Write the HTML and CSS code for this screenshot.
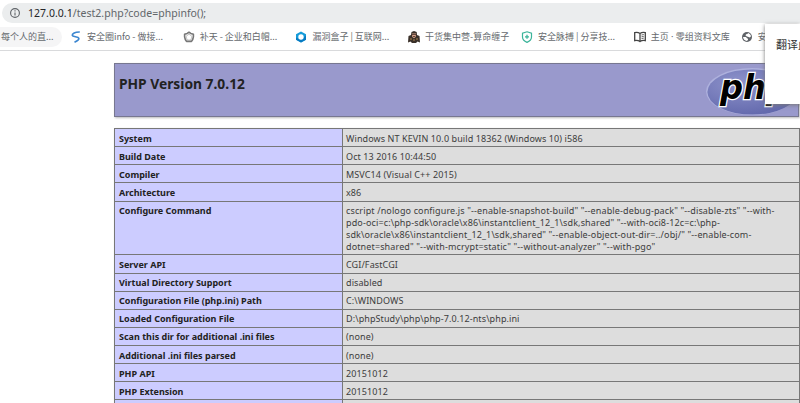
FILE: index.html
```html
<!DOCTYPE html>
<html lang="zh-CN">
<head>
<meta charset="utf-8">
<title>phpinfo()</title>
<link rel="stylesheet" href="styles.css">
</head>
<body>
<header class="toolbar">
  <div class="address">
    <svg class="info" viewBox="0 0 12 12"><circle cx="6" cy="6" r="4.4" fill="none" stroke="#5f6368" stroke-width="1.1"/><path d="M6 5.4v3M6 3.3v1.1" stroke="#5f6368" stroke-width="1.1"/></svg>
    <span class="url"><b>127.0.0.1</b>/test2.php?code=phpinfo();</span>
  </div>
</header>
<nav class="bookmarks">
  <a class="mark first"><span>每个人的直...</span></a>
  <a class="mark"><svg viewBox="0 0 12 12"><path d="M9.8 1C5 .9 2 2.4 2.3 4.3 2.6 6 8.2 5.5 8.8 7.2 9.3 8.7 7 10 4.5 11.2" fill="none" stroke="#3b86d0" stroke-width="1.7"/></svg><span>安全圈info - 做接...</span></a>
  <a class="mark"><svg viewBox="0 0 12 12"><path d="M6 1.2 7.8 2.4 10.4 3.3 10.4 5.9 9.7 8.5 8.5 10.4 6 10.2 3.5 10.4 2.3 8.5 1.6 5.9 1.6 3.3 4.2 2.4Z" fill="none" stroke="#777" stroke-width="1.6" stroke-linejoin="round"/><path d="M6 3.2 9 5.4 7.8 9H4.2L3 5.4Z" fill="none" stroke="#888" stroke-width=".5"/></svg><span>补天 - 企业和白帽...</span></a>
  <a class="mark"><svg viewBox="0 0 12 12"><path d="M6 .4 11 3.2V8.8L6 11.6 1 8.8V3.2Z" fill="#159bd9"/><path d="M1 6.5 6 8.8 11 4.5V8.8L6 11.6 1 8.8Z" fill="#087bc2"/><circle cx="6" cy="6" r="2.7" fill="#fff"/></svg><span>漏洞盒子 | 互联网...</span></a>
  <a class="mark wide"><svg viewBox="0 0 12 12"><path d="M3 4 3.5 1 6 0 8.7 1 9 4 11.5 5 12 11.5 9.5 10.5 8 12H4L2.5 10.5 0 11.5.5 5Z" fill="#3a3029"/><path d="M4 2.5h4l-.3 3.5L6 7.3 4.3 6Z" fill="#d9a48b"/><path d="M4 3.5h4M5 5.5h2" stroke="#493028" stroke-width=".8"/><path d="M2 8h2M8 8h2M5 9h2" stroke="#a98351"/></svg><span>干货集中营-算命缠子</span></a>
  <a class="mark"><svg viewBox="0 0 12 12"><path d="M6 .8 10.5 2.3V6C10.5 8.8 8.5 10.3 6 11.4 3.5 10.3 1.5 8.8 1.5 6V2.3Z" fill="none" stroke="#3bb49a" stroke-width="1.2"/><path d="M6 3.8v4M4 5.8h4" stroke="#3bb49a" stroke-width="1.3"/></svg><span>安全脉搏 | 分享技...</span></a>
  <a class="mark short"><svg viewBox="0 0 12 12"><path d="M6 2.5C4.5 1.4 2.5 1.2.7 1.6v8C2.5 9.2 4.5 9.5 6 10.6 7.5 9.5 9.5 9.2 11.3 9.6v-8C9.5 1.2 7.5 1.4 6 2.5ZM6 2.5v8" fill="none" stroke="#444" stroke-width="1.3"/><path d="M7.5 4 9.8 3.5M7.5 5.8 9.8 5.3M7.5 7.6 9.8 7.1" stroke="#444" stroke-width=".8"/></svg><span>主页<i class="dot"> · </i>零组资料文库</span></a>
  <a class="mark last"><svg viewBox="0 0 12 12"><circle cx="6" cy="6" r="5" fill="#5f6368"/><path d="M2 6h3l1 1.2 1 .5v1L6 10C3.8 9.8 2.2 8.3 2 6ZM7 2C8.5 2.4 9.7 3.6 10 5.3L8.8 6.6 7.5 6 6 5.4 4.5 4.4 5 3.2 6.5 3Z" fill="#fff"/></svg><span>安</span></a>
</nav>
<main class="page">
  <section class="banner">
    <h1>PHP Version 7.0.12</h1>
    <svg class="logo" viewBox="0 0 94 50">
      <defs><radialGradient id="g" cx=".35" cy=".3" r=".75"><stop offset="0" stop-color="#8e93cb"/><stop offset="1" stop-color="#6268ac"/></radialGradient></defs>
      <ellipse cx="47" cy="25.5" rx="46" ry="23.5" fill="#aeb1dd"/>
      <ellipse cx="47.4" cy="26" rx="45" ry="22.6" fill="url(#g)"/>
      <text x="15" y="32.5" textLength="69" lengthAdjust="spacingAndGlyphs">php</text>
    </svg>
  </section>
  <table class="info-table">
    <tr><th>System</th><td>Windows NT KEVIN 10.0 build 18362 (Windows 10) i586</td></tr>
    <tr><th>Build Date</th><td>Oct 13 2016 10:44:50</td></tr>
    <tr><th>Compiler</th><td>MSVC14 (Visual C++ 2015)</td></tr>
    <tr><th>Architecture</th><td>x86</td></tr>
    <tr class="config"><th>Configure Command</th><td>cscript /nologo configure.js "--enable-snapshot-build" "--enable-debug-pack" "--disable-zts" "--with-<br>pdo-oci=c:\php-sdk\oracle\x86\instantclient_12_1\sdk,shared" "--with-oci8-12c=c:\php-<br>sdk\oracle\x86\instantclient_12_1\sdk,shared" "--enable-object-out-dir=../obj/" "--enable-com-<br>dotnet=shared" "--with-mcrypt=static" "--without-analyzer" "--with-pgo"</td></tr>
    <tr><th>Server API</th><td>CGI/FastCGI</td></tr>
    <tr><th>Virtual Directory Support</th><td>disabled</td></tr>
    <tr><th>Configuration File (php.ini) Path</th><td>C:\WINDOWS</td></tr>
    <tr><th>Loaded Configuration File</th><td>D:\phpStudy\php\php-7.0.12-nts\php.ini</td></tr>
    <tr><th>Scan this dir for additional .ini files</th><td>(none)</td></tr>
    <tr><th>Additional .ini files parsed</th><td>(none)</td></tr>
    <tr><th>PHP API</th><td>20151012</td></tr>
    <tr><th>PHP Extension</th><td>20151012</td></tr>
    <tr><th></th><td></td></tr>
  </table>
</main>
<aside class="popup">翻译此</aside>
</body>
</html>
```
FILE: styles.css
```css
* { box-sizing: border-box; }
body { margin: 0; height: 403px; overflow: hidden; background: #fff; color: #222; font-family: "Noto Sans", "Noto Sans CJK SC", sans-serif; }
.toolbar { height: 23px; padding: 3px 0 0 2px; }
.address { display: flex; align-items: center; gap: 7px; height: 20px; padding-left: 7px; border-radius: 10px 0 0 10px; background: #ebedee; }
.info { width: 12px; height: 12px; flex: none; }
.url { font-size: 10.5px; line-height: 20px; letter-spacing: .03px; color: #62666a; white-space: nowrap; }
.url b { font-weight: 400; color: #252629; }
.bookmarks { display: flex; align-items: center; height: 28px; border-bottom: 1px solid #d9dadc; font-family: "Noto Sans CJK SC", sans-serif; font-size: 9px; color: #666a6e; }
.mark { display: flex; flex: none; align-items: center; gap: 5px; width: 112.7px; height: 20px; white-space: nowrap; }
.mark svg { width: 12px; height: 12px; flex: none; }
.mark.first { width: 62px; margin-right: 8px; padding-left: 1px; background: #f5f5f6; border-radius: 0 10px 10px 0; }
.mark.wide { width: 113px; }
.mark.short { width: 107px; }
.mark.last { width: 50px; }
.dot { font-family: "Noto Sans", sans-serif; font-style: normal; }
.page { width: 685px; margin: 12px 0 0 114px; }
.banner { display: flex; justify-content: space-between; height: 54px; border: 1px solid #777790; background: #9999cc; box-shadow: 1px 1px 2px #bbb; }
.banner h1 { margin: 10px 0 0 4px; font-size: 13.8px; line-height: 20px; font-weight: 700; }
.logo { width: 94px; height: 50px; margin-top: 2px; margin-right: -1px; }
.logo text { font: italic 700 33px "DejaVu Sans", sans-serif; fill: #000; stroke: #fff; stroke-width: 2.5px; paint-order: stroke; }
.info-table { width: 686px; margin-top: 11px; border-collapse: separate; border-spacing: 0; table-layout: fixed; border-top: 1px solid #777; border-left: 1px solid #777; box-shadow: 1px 1px 2px #bbb; }
tr { height: 18.15px; }
tr.config { height: 53.8px; }
th, td { padding: 3.5px 3px 1.5px; border-right: 1px solid #777; border-bottom: 1px solid #777; text-align: left; vertical-align: top; font-size: 9px; line-height: 12px; white-space: nowrap; }
tr.config th, tr.config td { padding: 3px 3px 1.8px; }
tr.config th { padding-left: 4px; }
th { width: 228px; padding-left: 4px; background: #ccccff; font-weight: 700; }
td { background: #ddd; color: #3c3c3c; letter-spacing: .1px; }
tr.config td { letter-spacing: .13px; }
.popup { position: absolute; left: 765px; top: 24px; width: 35px; height: 80px; padding: 12px 0 0 11px; overflow: hidden; background: #fff; box-shadow: 0 1px 4px #777; font: 11px/16px "Noto Sans CJK SC", sans-serif; color: #333; white-space: nowrap; }
```
